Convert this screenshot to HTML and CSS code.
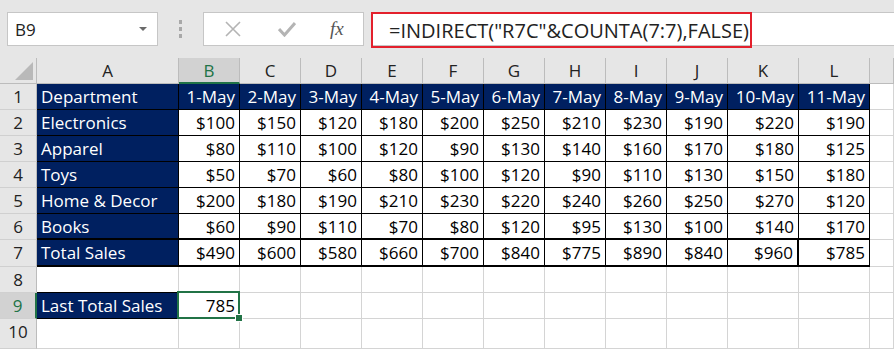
FILE: index.html
```html
<!DOCTYPE html>
<html lang="en">
<head>
    <meta charset="UTF-8">
    <meta name="viewport" content="width=device-width, initial-scale=1.0">
    <title>Last Total Sales</title>
    <link rel="stylesheet" href="styles.css">
</head>
<body>
    <!-- Formula bar -->
    <div class="toolbar">
        <div class="name-box">
            <span>B9</span>
            <span class="caret"></span>
        </div>
        <div class="grip"><i></i><i></i><i></i></div>
        <div class="fn-box">
            <svg class="ico" width="16" height="16" viewBox="0 0 16 16">
                <path d="M1 1 L15 15 M15 1 L1 15" stroke="#b4b4b4" stroke-width="1.6" fill="none"/>
            </svg>
            <svg class="ico" width="18" height="16" viewBox="0 0 18 16">
                <path d="M1 8 L6.5 14 L17 2" stroke="#b4b4b4" stroke-width="3" fill="none"/>
            </svg>
            <span class="fx">fx</span>
        </div>
        <div class="formula">
            <span class="highlight">=INDIRECT("R7C"&amp;COUNTA(7:7),FALSE)</span>
        </div>
    </div>

    <!-- Worksheet -->
    <div class="sheet" id="sheet"></div>

    <script>
        const letters = ['A', 'B', 'C', 'D', 'E', 'F', 'G', 'H', 'I', 'J', 'K', 'L', ''];

        const rows = [
            ['Department', '1-May', '2-May', '3-May', '4-May', '5-May', '6-May', '7-May', '8-May', '9-May', '10-May', '11-May'],
            ['Electronics', '$100', '$150', '$120', '$180', '$200', '$250', '$210', '$230', '$190', '$220', '$190'],
            ['Apparel', '$80', '$110', '$100', '$120', '$90', '$130', '$140', '$160', '$170', '$180', '$125'],
            ['Toys', '$50', '$70', '$60', '$80', '$100', '$120', '$90', '$110', '$130', '$150', '$180'],
            ['Home & Decor', '$200', '$180', '$190', '$210', '$230', '$220', '$240', '$260', '$250', '$270', '$120'],
            ['Books', '$60', '$90', '$110', '$70', '$80', '$120', '$95', '$130', '$100', '$140', '$170'],
            ['Total Sales', '$490', '$600', '$580', '$660', '$700', '$840', '$775', '$890', '$840', '$960', '$785'],
            [],
            ['Last Total Sales', '785'],
            []
        ];

        const sheet = document.getElementById('sheet');

        function addCell(cls, text) {
            const cell = document.createElement('div');
            cell.className = 'cell ' + cls;
            cell.textContent = text || '';
            sheet.appendChild(cell);
            return cell;
        }

        // Column headers
        addCell('corner');
        letters.forEach(letter => {
            addCell('col-head' + (letter === 'B' ? ' selected' : ''), letter);
        });

        // Rows
        rows.forEach((row, r) => {
            const rowNo = r + 1;
            addCell('row-head' + (rowNo === 9 ? ' selected' : ''), rowNo);

            letters.forEach((letter, c) => {
                const value = row[c];
                const classes = [];
                const inTable = rowNo <= 7 && c <= 11;

                if (inTable || (rowNo === 9 && c === 0)) classes.push('data');
                if (rowNo === 8 && c === 0) classes.push('edge');
                if ((inTable && c === 0) || (rowNo === 1 && c <= 11) || (rowNo === 9 && c === 0)) classes.push('fill');
                if (c > 0) classes.push('num');
                if ((rowNo === 6 || rowNo === 7) && c <= 11) classes.push('thick');
                if (rowNo === 7 && c === 10) classes.push('thick-r');
                if (rowNo === 9 && c === 1) classes.push('active');

                addCell(classes.join(' '), value);
            });
        });
    </script>
</body>
</html>
```

FILE: styles.css
```css
body {
    margin: 0;
    background-color: #e6e6e6;
    font-family: "Open Sans", Arial, sans-serif;
    color: #000;
    overflow: hidden;
}

/* Formula bar */
.toolbar {
    display: flex;
    align-items: center;
    height: 58px;
    padding: 0 0 0 7px;
    box-sizing: border-box;
}

.name-box {
    display: flex;
    align-items: center;
    justify-content: space-between;
    width: 151px;
    height: 34px;
    padding: 0 10px 0 7px;
    box-sizing: border-box;
    background-color: #fff;
    border: 1px solid #c6c6c6;
    font-size: 17px;
    color: #222;
}

.caret {
    width: 0;
    height: 0;
    border-left: 4px solid transparent;
    border-right: 4px solid transparent;
    border-top: 4px solid #6a6a6a;
}

.grip {
    display: flex;
    flex-direction: column;
    gap: 3px;
    margin: 0 21px 0 21px;
}

.grip i {
    display: block;
    width: 3px;
    height: 4px;
    background-color: #a8a8a8;
}

.fn-box {
    display: flex;
    align-items: center;
    width: 161px;
    height: 34px;
    padding: 0 0 0 21px;
    box-sizing: border-box;
    background-color: #fff;
    border: 1px solid #c6c6c6;
}

.fn-box .ico {
    margin-right: 37px;
}

.fx {
    font-family: "Liberation Serif", serif;
    font-style: italic;
    font-size: 19px;
    color: #555;
    margin-left: -3px;
}

.formula {
    flex: 1;
    height: 34px;
    margin-left: 7px;
    background-color: #fff;
    border-top: 1px solid #c6c6c6;
    border-bottom: 1px solid #c6c6c6;
    box-sizing: border-box;
}

.highlight {
    display: inline-flex;
    align-items: center;
    height: 36px;
    margin-top: -1px;
    padding: 0 1px 0 16px;
    box-sizing: border-box;
    border: 2px solid #e3202c;
    font-size: 20px;
    color: #222;
    white-space: nowrap;
}

/* Worksheet */
.sheet {
    display: grid;
    grid-template-columns: 37px 142px repeat(9, 61px) 71px 71px 1fr;
    grid-template-rows: 26px repeat(6, 26px) 27px repeat(2, 26px) 1fr;
    height: 291px;
    background-color: #fff;
}

.cell {
    position: relative;
    box-sizing: border-box;
    border-right: 1px solid #d4d4d4;
    border-bottom: 1px solid #d4d4d4;
    padding: 0 4px;
    font-size: 17px;
    line-height: 25px;
    white-space: nowrap;
    overflow: visible;
}

.corner,
.col-head,
.row-head {
    background-color: #e6e6e6;
    border-right-color: #bcbcbc;
    border-bottom-color: #bcbcbc;
    color: #222;
    text-align: center;
    padding: 0;
}

.corner::after {
    content: "";
    position: absolute;
    right: 3px;
    bottom: 3px;
    border-left: 18px solid transparent;
    border-bottom: 18px solid #b9b9b9;
}

.row-head {
    border-bottom-color: #d0d0d0;
}

.col-head.selected {
    background-color: #d2d2d2;
    border-bottom: 2px solid #217346;
    color: #217346;
}

.row-head.selected {
    background-color: #d2d2d2;
    border-right: 2px solid #217346;
    color: #217346;
}

.data {
    border-right-color: #000;
    border-bottom-color: #000;
}

.edge {
    border-bottom-color: #000;
}

.fill {
    background-color: #002060;
    color: #fff;
}

.num {
    text-align: right;
}

.thick {
    border-bottom: 2px solid #000;
}

.thick-r {
    border-right: 2px solid #000;
}

.active::after {
    content: "";
    position: absolute;
    left: -2px;
    top: -2px;
    right: -1px;
    bottom: -1px;
    border: 2px solid #217346;
}

.active::before {
    content: "";
    position: absolute;
    right: -4px;
    bottom: -4px;
    width: 6px;
    height: 6px;
    background-color: #217346;
    border: 1px solid #fff;
    z-index: 1;
}
```
